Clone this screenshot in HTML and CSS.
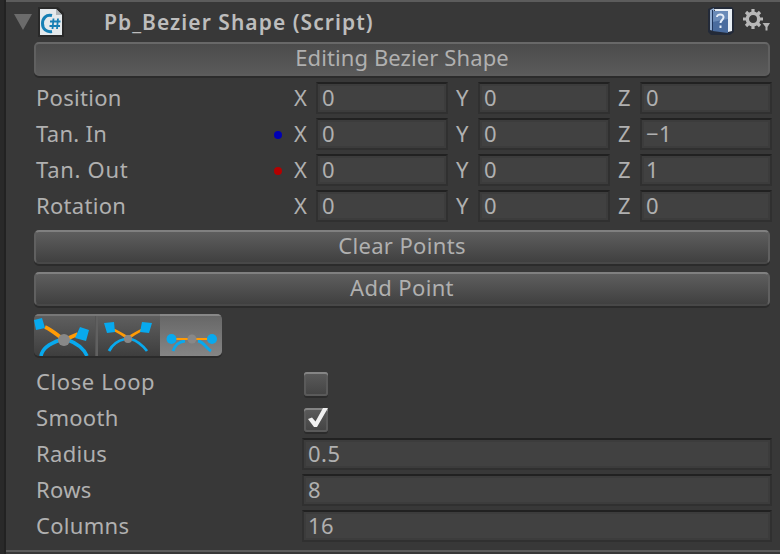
FILE: index.html
```
<!DOCTYPE html>
<html lang="en">
<head>
<meta charset="utf-8">
<title>Pb_Bezier Shape</title>
<link rel="stylesheet" href="styles.css">
</head>
<body>
<main class="inspector">
  <header class="header">
    <svg class="fold" width="18" height="16" viewBox="0 0 18 16"><path d="M0 0H18L9 16Z" fill="#6b6b6b"/></svg>
    <svg class="script-icon" width="26" height="30" viewBox="0 0 26 30">
      <path d="M0 0H20L26 6V30H0Z" fill="#292929"/>
      <path d="M2 2H18L24 8V28H2Z" fill="#e4e9ec"/>
      <path d="M18 2V8H24Z" fill="#aeb4b8"/>
      <path d="M14 8.500C8 7 4.500 11.500 4.500 16.500c0 5.500 4 9 9.500 8" fill="none" stroke="#167fb4" stroke-width="3"/>
      <path d="M15.500 11.500l-1 10.500M20 11.500l-1 10.500M12 14.500H22.500M11.500 19H22" fill="none" stroke="#167fb4" stroke-width="1.800"/>
    </svg>
    <h1 class="title">Pb_Bezier Shape (Script)</h1>
    <svg class="help" width="26" height="28" viewBox="0 0 26 28">
      <path d="M0 2L4 0H24L26 3V25L22 28H3L0 25Z" fill="#232a38"/>
      <path d="M6 2H24V24L20 25Z" fill="#e9eff5"/>
      <path d="M2 3L6 1V24L2 23Z" fill="#8fabd0"/>
      <path d="M4.500 4H20V26L4.500 24Z" fill="#4a6c9e"/>
      <path d="M4.500 4H20V12L4.500 15Z" fill="#6a8bb8"/>
      <path d="M4.500 3V24" stroke="#1e355c"/>
      <path d="M9 10C9 6.500 16 6.500 15.500 10.500C15.200 13 12.500 13 12.500 16M12.500 18.500V21" fill="none" stroke="#e4edf8" stroke-width="2"/>
    </svg>
    <svg class="gear" width="28" height="24" viewBox="0 0 28 24">
      <g stroke="#b8b8b8" fill="none">
        <circle cx="10" cy="10" r="5.700" stroke-width="3.400"/>
        <path d="M10 0V4M10 16V20M0 10H4M16 10H20M3 3L6 6M14 14L17 17M3 17L6 14M14 6L17 3" stroke-width="3.200"/>
      </g>
      <path d="M19.500 14H27L24.500 18V21.500H22.500V18Z" fill="#b4b4b4"/>
    </svg>
  </header>

  <button class="button pressed">Editing Bezier Shape</button>

  <section class="rows">
    <div class="row"><span class="label">Position</span><i class="dot"></i>
      <span class="axis">X</span><span class="field">0</span><span class="axis">Y</span><span class="field">0</span><span class="axis">Z</span><span class="field">0</span></div>
    <div class="row"><span class="label">Tan. In</span><i class="dot blue"></i>
      <span class="axis">X</span><span class="field">0</span><span class="axis">Y</span><span class="field">0</span><span class="axis">Z</span><span class="field">−1</span></div>
    <div class="row"><span class="label tan-out">Tan. Out</span><i class="dot red"></i>
      <span class="axis">X</span><span class="field">0</span><span class="axis">Y</span><span class="field">0</span><span class="axis">Z</span><span class="field">1</span></div>
    <div class="row"><span class="label">Rotation</span><i class="dot"></i>
      <span class="axis">X</span><span class="field">0</span><span class="axis">Y</span><span class="field">0</span><span class="axis">Z</span><span class="field">0</span></div>
  </section>

  <div class="actions">
    <button class="button">Clear Points</button>
    <button class="button">Add Point</button>
  </div>

  <div class="toolbar">
    <span class="tool">
      <svg width="62" height="42" viewBox="0 0 62 42">
        <path d="M7 42C8 36 14 30 26 26M34 26C45 30 50 35 53 42" fill="none" stroke="#08a9ee" stroke-width="3.600"/>
        <path d="M11 13C18 16 22 20 30 26L44 20" fill="none" stroke="#ff9b05" stroke-width="3.800"/>
        <path d="M0 6L8 4L11 14L2 16ZM46 13L55 16L52 27L41 24Z" fill="#08a9ee"/>
        <circle cx="30" cy="26" r="6" fill="#888"/>
      </svg>
    </span>
    <span class="tool">
      <svg width="64" height="42" viewBox="0 0 64 42">
        <path d="M13 37C16 31 20 27 29 25M35 25C42 27 47 32 51 37" fill="none" stroke="#08a9ee" stroke-width="2.800"/>
        <path d="M18 16C23 18 27 21 32 24C37 21 41 18 46 16" fill="none" stroke="#ff9b05" stroke-width="2.800"/>
        <path d="M8 9L18 8L19 18L11 19ZM46 8L56 9L53 19L44 18Z" fill="#08a9ee"/>
        <circle cx="32" cy="25" r="4" fill="#888"/>
      </svg>
    </span>
    <span class="tool active">
      <svg width="62" height="42" viewBox="0 0 62 42">
        <path d="M13 37C15 31 18 28 25 27M38 27C44 28 46 34 51 37" fill="none" stroke="#08a9ee" stroke-width="2.800"/>
        <path d="M16 25H28M36 25H48" stroke="#ff9b05" stroke-width="2"/>
        <circle cx="11.500" cy="25" r="5" fill="#08a9ee"/><circle cx="52" cy="25" r="5" fill="#08a9ee"/>
        <circle cx="32" cy="25" r="4.500" fill="#888"/>
      </svg>
    </span>
  </div>

  <section class="rows settings">
    <div class="row"><span class="label wide loop">Close Loop</span><span class="check"></span></div>
    <div class="row"><span class="label wide">Smooth</span><span class="check"><svg width="24" height="24" viewBox="0 0 24 24"><path d="M4 11L8 9.500L11.500 13.500L19 0H24L13 19H10Z" fill="#f0f0f0"/></svg></span></div>
    <div class="row"><span class="label wide">Radius</span><span class="field">0.5</span></div>
    <div class="row"><span class="label wide">Rows</span><span class="field">8</span></div>
    <div class="row"><span class="label wide">Columns</span><span class="field">16</span></div>
  </section>
</main>
</body>
</html>
```
FILE: styles.css
```
* { box-sizing: border-box; }
body {
  margin: 0;
  background: #383838;
  color: #b0b0b0;
  font: 22px/32px "Noto Sans", sans-serif;
}
.inspector {
  height: 554px;
  padding: 0 8px 0 28px;
  border-left: 4px solid #292929;
  box-shadow: inset 2px 0 #222;
  background:
    linear-gradient(#5c5c5c, #5c5c5c) 2px 0 / 100% 2px no-repeat,
    linear-gradient(#5c5c5c, #5c5c5c) 2px 550px / 100% 2px no-repeat,
    #383838;
}
.header { display: flex; height: 42px; margin-left: -18px; padding-top: 7px; align-items: flex-start; }
.fold { margin-top: 7px; }
.script-icon { margin-left: 6px; }
.title { margin: -1px 0 0 40px; font-size: 21px; line-height: 32px; font-weight: 600; color: #bdbdbd; letter-spacing: 1.05px; white-space: nowrap; }
.help { margin-left: auto; }
.gear { margin: 2px 1px 0 9px; }
.button {
  display: block;
  width: 736px;
  height: 34px;
  margin: 0 0 0 2px;
  padding: 0 0 3px;
  border: 2px solid;
  border-color: #808080 #606060 #484848;
  border-radius: 5px;
  background: linear-gradient(#606060, #3e3e3e) border-box;
  box-shadow: 0 2px #2b2b2b;
  color: #b0b0b0;
  font: inherit;
  line-height: 27px;
  letter-spacing: .35px;
}
.pressed { border-color: #686868 #606060 #5c5c5c; background: linear-gradient(#4b4b4b, #5a5a5a); letter-spacing: .1px; }
.rows { padding-top: 4px; }
.row { display: flex; height: 36px; align-items: center; }
.label { width: 238px; padding: 0 0 2px 4px; letter-spacing: .3px; white-space: nowrap; }
.wide { width: 270px; flex: none; }
.tan-out { letter-spacing: .7px; }
.loop { letter-spacing: .6px; }
.dot { width: 8px; height: 8px; margin: 2px 4px 0; border-radius: 50%; flex: none; }
.blue { background: #0000b4; }
.red { background: #b40000; }
.axis { width: 30px; padding: 0 0 2px 8px; flex: none; }
.field {
  flex: 1;
  height: 32px;
  padding-left: 4px;
  border: 2px solid #303030;
  border-top-color: #212121;
  background: #414141;
  box-shadow: inset 0 0 0 2px #3c3c3c;
  line-height: 26px;
  letter-spacing: .5px;
}
.actions { display: grid; gap: 8px; padding-top: 6px; }
.toolbar {
  display: flex;
  width: 188px;
  height: 42px;
  margin: 8px 0 0 2px;
  border-radius: 5px;
  overflow: hidden;
  box-shadow: 0 2px #2b2b2b;
}
.tool { width: 62px; height: 42px; background: linear-gradient(#606060, #3e3e3e); box-shadow: inset 0 2px #777, inset -1px 0 #555; }
.tool:nth-child(2) { width: 64px; box-shadow: inset 0 2px #777, inset 2px 0 #606060; }
.active { background: linear-gradient(#666, #858585); box-shadow: inset 0 2px #888; }
.tool svg { display: block; }
.settings { padding-top: 8px; }
.check {
  width: 24px;
  height: 24px;
  margin: 4px 0 0 2px;
  border-radius: 3px;
  background: linear-gradient(#5b5b5b, #434343);
  box-shadow: inset 0 2px #858585, inset 0 0 0 2px #5a5a5a, 0 2px #2b2b2b;
}
.check svg { display: block; }
```
